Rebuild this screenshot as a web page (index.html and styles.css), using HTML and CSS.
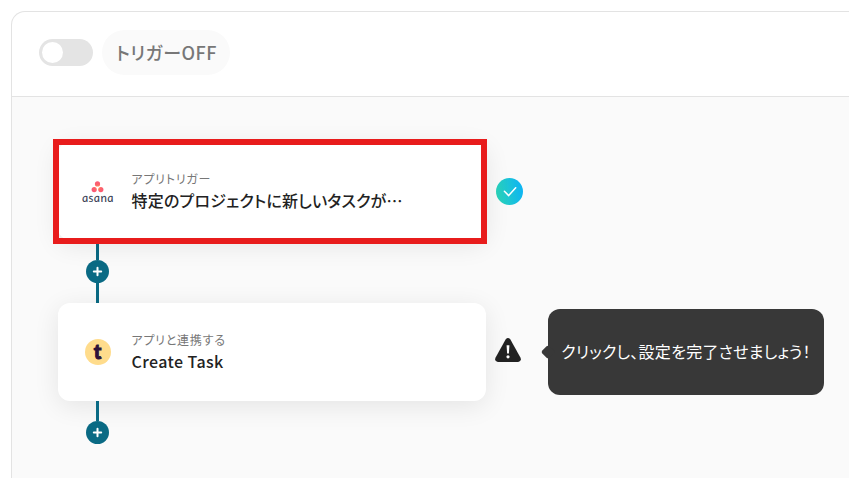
FILE: index.html
```html
<!DOCTYPE html>
<html lang="ja">
<head>
    <meta charset="UTF-8">
    <meta name="viewport" content="width=device-width, initial-scale=1.0">
    <title>フローボット</title>
    <link rel="stylesheet" href="styles.css">
</head>
<body>
    <div class="panel">
        <header class="panel-header">
            <div class="toggle"><span class="knob"></span></div>
            <div class="status">トリガーOFF</div>
        </header>

        <main class="flow">
            <!-- Trigger -->
            <div class="step">
                <div class="card selected">
                    <div class="app-icon asana">
                        <svg width="14" height="14" viewBox="0 0 14 14">
                            <defs>
                                <radialGradient id="dots" gradientUnits="userSpaceOnUse" cx="7" cy="6.5" r="7">
                                    <stop offset="0" stop-color="#ffa04d"/>
                                    <stop offset="0.45" stop-color="#fc636b"/>
                                    <stop offset="1" stop-color="#f9577a"/>
                                </radialGradient>
                            </defs>
                            <g fill="url(#dots)">
                                <circle cx="6.5" cy="2.9" r="2.6"/>
                                <circle cx="3.2" cy="8.6" r="2.6"/>
                                <circle cx="9.8" cy="8.6" r="2.6"/>
                            </g>
                        </svg>
                        <span class="asana-name">asana</span>
                    </div>
                    <div class="card-text">
                        <p class="label">アプリトリガー</p>
                        <p class="title title-long">特定のプロジェクトに新しいタスクが…</p>
                    </div>
                </div>
                <svg class="done" width="27" height="27" viewBox="0 0 27 27">
                    <defs>
                        <linearGradient id="doneBg" x1="0" y1="0.6" x2="1" y2="0.4">
                            <stop offset="0" stop-color="#2bd4b8"/>
                            <stop offset="1" stop-color="#0db4f4"/>
                        </linearGradient>
                    </defs>
                    <circle cx="13.5" cy="13.5" r="13.5" fill="url(#doneBg)"/>
                    <path d="M8.4 13.3l4.3 4.3 7-7.8" fill="none" stroke="#fff" stroke-width="1.5" stroke-linecap="round" stroke-linejoin="round"/>
                </svg>
            </div>

            <div class="connector">
                <span class="line"></span>
                <svg class="plus" width="23" height="23" viewBox="0 0 23 23">
                    <circle cx="11.5" cy="11.5" r="11.5" fill="#0a6a84"/>
                    <path d="M11.5 7.8v7.4M7.8 11.5h7.4" stroke="#fff" stroke-width="2" stroke-linecap="round"/>
                </svg>
                <span class="line"></span>
            </div>

            <!-- Action -->
            <div class="step">
                <div class="card">
                    <div class="app-icon">
                        <span class="tayori">t</span>
                    </div>
                    <div class="card-text">
                        <p class="label">アプリと連携する</p>
                        <p class="title">Create Task</p>
                    </div>
                </div>
                <svg class="warning" width="26" height="24" viewBox="0 0 26 24">
                    <path d="M10.6 1.4Q13-1.3 15.4 1.4L25.4 19.6Q27 23.4 23.2 24H2.8Q-1 23.4.6 19.6Z" fill="#222"/>
                    <path d="M11.6 7.3h2.8l-.5 8.2h-1.8z" fill="#fff"/>
                    <circle cx="13" cy="18.8" r="1.6" fill="#fff"/>
                </svg>
                <div class="tooltip">クリックし、設定を完了させましょう！</div>
            </div>

            <div class="connector">
                <span class="line"></span>
                <svg class="plus" width="23" height="23" viewBox="0 0 23 23">
                    <circle cx="11.5" cy="11.5" r="11.5" fill="#0a6a84"/>
                    <path d="M11.5 7.8v7.4M7.8 11.5h7.4" stroke="#fff" stroke-width="2" stroke-linecap="round"/>
                </svg>
            </div>
        </main>
    </div>
</body>
</html>
```

FILE: styles.css
```css
*, *::before, *::after {
    box-sizing: border-box;
}
body {
    margin: 0;
    height: 478px;
    overflow: hidden;
    background: #fff;
    color: #222;
    font-family: "Noto Sans CJK JP", sans-serif;
    font-feature-settings: "palt";
}
p {
    margin: 0;
}
.panel {
    margin: 11px 0 0 11px;
    height: 480px;
    border: 1px solid #e3e3e3;
    border-right: none;
    border-radius: 14px 0 0 0;
    overflow: hidden;
}
.panel-header {
    display: flex;
    align-items: center;
    gap: 9px;
    height: 85px;
    padding: 0 0 3px 27px;
    border-bottom: 1px solid #e3e3e3;
}
.toggle {
    width: 54px;
    height: 27px;
    padding: 3px;
    border-radius: 14px;
    background: #e4e4e4;
}
.knob {
    display: block;
    width: 21px;
    height: 21px;
    border-radius: 50%;
    background: #fff;
}
.status {
    width: 128px;
    height: 45px;
    padding-left: 1px;
    border-radius: 23px;
    background: #fafafa;
    color: #777;
    font-size: 18px;
    font-weight: 500;
    letter-spacing: 0.5px;
    line-height: 45px;
    text-align: center;
}
.flow {
    height: 400px;
    padding: 45px 0 0 46px;
    background: #fafafa;
}
.step {
    display: flex;
    align-items: center;
}
.card {
    display: flex;
    align-items: center;
    width: 428px;
    height: 98px;
    padding-left: 20px;
    border-radius: 12px;
    background: #fff;
    box-shadow: 0 5px 26px rgba(0, 0, 0, 0.09);
}
.selected {
    position: relative;
}
/* highlight frame over the card edges */
.selected::after {
    content: "";
    position: absolute;
    top: -3px;
    left: -5px;
    width: 434px;
    height: 105px;
    border: 6px solid #e81c1c;
}
.app-icon {
    display: flex;
    flex-direction: column;
    align-items: center;
    width: 39px;
}
/* italic has the round one-storey "a", the skew stands it upright again */
.asana-name {
    color: #3d4458;
    font-family: Lato, sans-serif;
    font-size: 12px;
    font-style: italic;
    font-weight: 500;
    letter-spacing: 0.4px;
    line-height: 6px;
    transform: skewX(8deg);
}
.tayori {
    width: 26px;
    height: 26px;
    border-radius: 50%;
    background: #ffdc8c;
    color: #2d1238;
    font-family: Lato, sans-serif;
    font-size: 20px;
    font-weight: 900;
    line-height: 24px;
    text-align: center;
    -webkit-text-stroke: 1px #2d1238;
}
.card-text {
    margin-left: 14.5px;
    padding-bottom: 2px;
    white-space: nowrap;
}
.label {
    color: #777;
    font-size: 12px;
    letter-spacing: 0.75px;
    line-height: 20px;
}
.title {
    font-size: 16px;
    font-weight: 500;
    letter-spacing: 0.4px;
    line-height: 22px;
}
.title-long {
    letter-spacing: 0.2px;
}
.done {
    margin-left: 10px;
}
.warning {
    margin: 0 27px 4px 9px;
}
.tooltip {
    position: relative;
    width: 276px;
    height: 86px;
    border-radius: 12px;
    background: #383838;
    color: #fff;
    font-size: 16px;
    letter-spacing: 0.25px;
    line-height: 85px;
    text-align: center;
    white-space: nowrap;
}
.tooltip::before {
    content: "";
    position: absolute;
    top: 38px;
    left: -5px;
    width: 10px;
    height: 10px;
    border-radius: 2px;
    background: #383838;
    transform: rotate(45deg);
}
.connector {
    display: flex;
    flex-direction: column;
    align-items: center;
    width: 23px;
    margin-left: 28px;
}
.line {
    width: 3px;
    height: 20px;
    background: #0a6a84;
}
.plus {
    display: block;
}
```
